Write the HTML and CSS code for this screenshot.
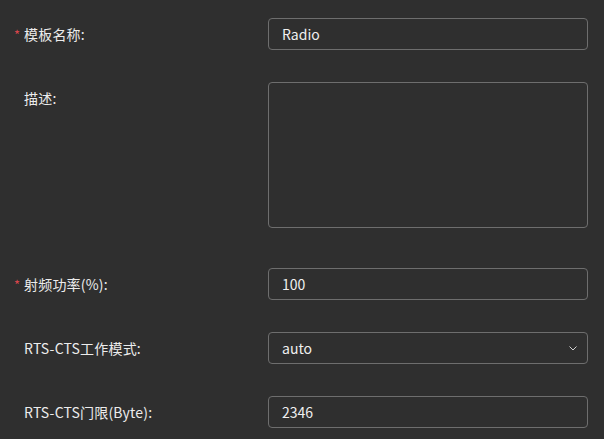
FILE: index.html
```html
<!DOCTYPE html>
<html lang="zh-CN">
<head>
    <meta charset="UTF-8">
    <title>射频模板</title>
    <link rel="stylesheet" href="styles.css">
</head>
<body>
<form class="tpl-form">
    <div class="form-row">
        <label class="form-label required" for="tpl_name">模板名称:</label>
        <input id="tpl_name" class="form-input" type="text" value="Radio"/>
    </div>
    <div class="form-row form-row-area">
        <label class="form-label" for="tpl_desc">描述:</label>
        <textarea id="tpl_desc" class="form-input form-area"></textarea>
    </div>
    <div class="form-row">
        <label class="form-label required" for="tx_power">射频功率(%):</label>
        <input id="tx_power" class="form-input" type="text" value="100"/>
    </div>
    <div class="form-row">
        <label class="form-label" for="rts_mode">RTS-CTS工作模式:</label>
        <div class="form-input form-select" id="rts_mode">
            <span>auto</span>
            <svg class="select-arrow" width="8" height="5" viewBox="0 0 8 5">
                <path d="M0.5 0.5 L4 4 L7.5 0.5" fill="none" stroke="#d0d0d0" stroke-width="1"/>
            </svg>
        </div>
    </div>
    <div class="form-row">
        <label class="form-label" for="rts_limit">RTS-CTS门限(Byte):</label>
        <input id="rts_limit" class="form-input" type="text" value="2346"/>
    </div>
</form>
</body>
</html>
```

FILE: styles.css
```css
body {
    margin: 0;
    background-color: #2f2f2f;
    font-family: "Noto Sans CJK SC", "Noto Sans", sans-serif;
    font-size: 14px;
    color: #e8e8e8;
}

.tpl-form {
    padding: 18px 0 0 24px;
}

.form-row {
    display: flex;
    align-items: flex-start;
    margin-bottom: 32px;
}

.form-row-area {
    margin-bottom: 40px;
}

.form-label {
    position: relative;
    width: 244px;
    line-height: 32px;
    color: #ececec;
    letter-spacing: 0.2px;
}

.required::before {
    content: "*";
    position: absolute;
    left: -10px;
    top: 1px;
    color: #d8454b;
    font-size: 13px;
}

.form-input {
    box-sizing: border-box;
    width: 320px;
    height: 32px;
    padding: 0 13px;
    background: transparent;
    border: 1px solid #6e6e6e;
    border-radius: 4px;
    color: #f0f0f0;
    font-family: inherit;
    font-size: 14px;
    outline: none;
}

.form-area {
    height: 146px;
    resize: none;
}

.form-select {
    display: flex;
    align-items: center;
    justify-content: space-between;
    padding-right: 10px;
}
```
